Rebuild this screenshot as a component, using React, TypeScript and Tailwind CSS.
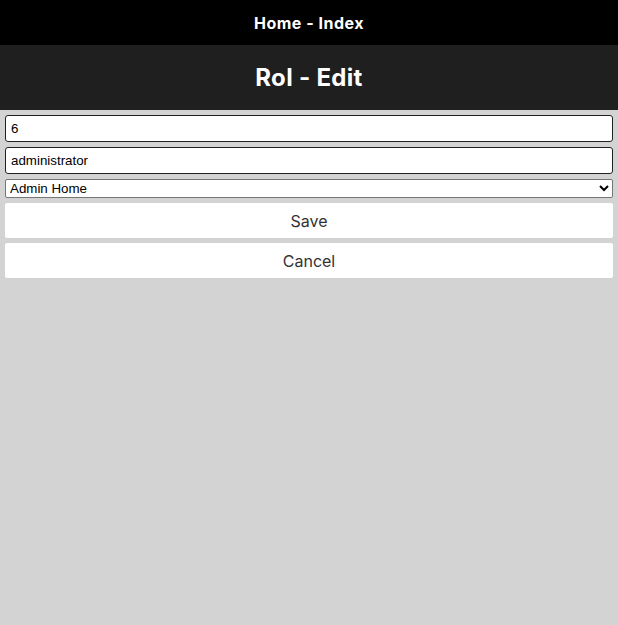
import { useState } from "react";

const HEAD = "font-['Inter','Open_Sans',sans-serif] font-bold text-white";
const FIELD = "font-['Liberation_Sans',Arial,sans-serif] text-[13.33px] text-black";

export default function App() {
  const [id, setId] = useState("6");
  const [name, setName] = useState("administrator");
  const [home, setHome] = useState("Admin Home");

  return (
    <div className="flex min-h-[625px] flex-col bg-[#d3d3d3]">
      <header className="flex h-[45px] items-center justify-center bg-black">
        <span className={`${HEAD} text-[16px] tracking-[0.5px]`}>Home - Index</span>
      </header>
      <div className="flex h-[65px] items-center justify-center bg-[#1f1f1f]">
        <h1 className={`${HEAD} text-[24px] tracking-[0.3px]`}>Rol - Edit</h1>
      </div>

      <form className="flex flex-col gap-[5px] p-[5px]" onSubmit={(e) => e.preventDefault()}>
        <input
          value={id}
          onChange={(e) => setId(e.target.value)}
          className={`${FIELD} h-[27px] rounded-[3px] border border-[#222] bg-white px-[5px] outline-none`}
        />
        <input
          value={name}
          onChange={(e) => setName(e.target.value)}
          className={`${FIELD} h-[27px] rounded-[3px] border border-[#222] bg-white px-[5px] outline-none`}
        />
        <select
          value={home}
          onChange={(e) => setHome(e.target.value)}
          className={`${FIELD} h-[19px] rounded-[2px] border border-[#767676] bg-white pl-0 outline-none`}
        >
          <option>Admin Home</option>
          <option>User Home</option>
        </select>
        <button
          type="submit"
          className="h-[35px] rounded-[2px] bg-white font-['Inter','Open_Sans',sans-serif] text-[16px] text-[#333]"
        >
          Save
        </button>
        <button
          type="button"
          className="h-[35px] rounded-[2px] bg-white font-['Inter','Open_Sans',sans-serif] text-[16px] text-[#333]"
        >
          Cancel
        </button>
      </form>
    </div>
  );
}
